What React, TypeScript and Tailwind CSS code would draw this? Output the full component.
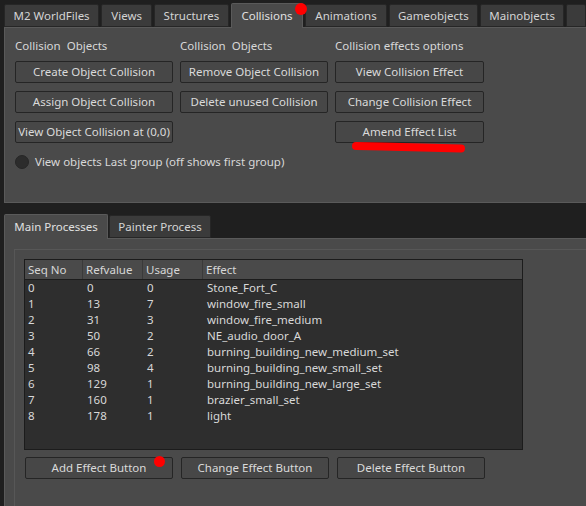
import React from 'react';

const topTabs = [
  { label: 'M2 WorldFiles', w: 'w-[97px]' },
  { label: 'Views', w: 'w-[52px]' },
  { label: 'Structures', w: 'w-[76px]' },
  { label: 'Collisions', w: 'w-[74px]', active: true },
  { label: 'Animations', w: 'w-[83px]' },
  { label: 'Gameobjects', w: 'w-[91px]' },
  { label: 'Mainobjects', w: 'w-[86px]' },
  { label: '', w: 'w-[20px]' },
];

const rows = [
  [0, 0, 0, 'Stone_Fort_C'],
  [1, 13, 7, 'window_fire_small'],
  [2, 31, 3, 'window_fire_medium'],
  [3, 50, 2, 'NE_audio_door_A'],
  [4, 66, 2, 'burning_building_new_medium_set'],
  [5, 98, 4, 'burning_building_new_small_set'],
  [6, 129, 1, 'burning_building_new_large_set'],
  [7, 160, 1, 'brazier_small_set'],
  [8, 178, 1, 'light'],
];

function Btn({ children, className = '' }: { children: React.ReactNode; className?: string }) {
  return (
    <div
      className={`h-[22px] flex items-center justify-center rounded-[2px] border border-[#252525] bg-[#474747] text-[#dadada] whitespace-nowrap ${className}`}
    >
      {children}
    </div>
  );
}

export default function App() {
  return (
    <div
      className="relative w-[586px] h-[506px] overflow-hidden bg-[#1f1f1f] text-[11.5px] text-[#d8d8d8]"
      style={{ fontFamily: '"Noto Sans", "Open Sans", sans-serif' }}
    >
      {/* top tab bar */}
      <div className="flex items-end h-[27px] pl-1 gap-[2px]">
        {topTabs.map((t, i) =>
          t.active ? (
            <div
              key={i}
              className={`${t.w} h-[25px] -mb-px z-10 flex items-center justify-center bg-[#4a4a4a] border border-b-0 border-[#5a5a5a] rounded-t-[2px] text-[#e0e0e0]`}
            >
              {t.label}
            </div>
          ) : (
            <div
              key={i}
              className={`${t.w} h-[23px] flex items-center justify-center bg-[#3b3b3b] border border-[#262626] rounded-t-[2px] text-[#d4d4d4]`}
            >
              {t.label}
            </div>
          )
        )}
      </div>

      {/* top panel */}
      <div className="ml-1 h-[176px] bg-[#4a4a4a] border-l border-t border-b border-[#5a5a5a] pl-[10px] pt-[10px]">
        <div className="grid grid-cols-[158px_148px_149px] gap-x-[7px] gap-y-[8px] auto-rows-[22px] grid-rows-[15px]">
          <div className="leading-[15px]">Collision&nbsp; Objects</div>
          <div className="leading-[15px]">Collision&nbsp; Objects</div>
          <div className="leading-[15px]">Collision effects options</div>
          <Btn>Create Object Collision</Btn>
          <Btn>Remove Object Collision</Btn>
          <Btn>View Collision Effect</Btn>
          <Btn>Assign Object Collision</Btn>
          <Btn>Delete unused Collision</Btn>
          <Btn>Change Collision Effect</Btn>
          <Btn>View Object Collision at (0,0)</Btn>
          <div />
          <Btn>Amend Effect List</Btn>
        </div>
        <div className="flex items-center gap-[6px] mt-[11px] h-[15px]">
          <div className="w-[14px] h-[14px] rounded-full bg-[#2c2c2c] border border-[#262626]" />
          <span>View objects Last group (off shows first group)</span>
        </div>
      </div>

      {/* bottom tab bar */}
      <div className="flex items-end h-[35px] pl-1 gap-px">
        <div className="w-[104px] h-[25px] -mb-px z-10 flex items-center justify-center bg-[#4a4a4a] border border-b-0 border-[#5a5a5a] rounded-t-[2px] text-[#e0e0e0]">
          Main Processes
        </div>
        <div className="w-[102px] h-[23px] flex items-center justify-center bg-[#3b3b3b] border border-[#262626] rounded-t-[2px] text-[#d4d4d4]">
          Painter Process
        </div>
      </div>

      {/* bottom panel */}
      <div className="ml-1 h-[300px] bg-[#4a4a4a] border-l border-t border-[#5a5a5a] pl-[9px] pt-[10px]">
        <div className="h-full border-l border-t border-[#575757] pl-[9px] pt-[9px]">
          <div className="w-[499px] h-[191px] border border-[#1c1c1c] bg-[#2e2e2e] flex flex-col">
            <div className="h-[20px] flex bg-[#4a4a4a] border-b border-[#1c1c1c] text-[#d6d6d6]">
              <div className="w-[58px] pl-[3px] flex items-center border-r border-[#3a3a3a]">Seq No</div>
              <div className="w-[60px] pl-[3px] flex items-center border-r border-[#3a3a3a]">Refvalue</div>
              <div className="w-[60px] pl-[3px] flex items-center border-r border-[#3a3a3a]">Usage</div>
              <div className="flex-1 pl-[3px] flex items-center">Effect</div>
            </div>
            {rows.map((r) => (
              <div key={r[0]} className="h-[16px] flex items-center text-[#d8d8d8]">
                <div className="w-[58px] pl-[3px]">{r[0]}</div>
                <div className="w-[60px] pl-[4px]">{r[1]}</div>
                <div className="w-[60px] pl-[4px]">{r[2]}</div>
                <div className="flex-1 pl-[4px]">{r[3]}</div>
              </div>
            ))}
          </div>
          <div className="flex gap-[8px] mt-[7px] ml-px">
            <Btn className="w-[148px]">Add Effect Button</Btn>
            <Btn className="w-[148px]">Change Effect Button</Btn>
            <Btn className="w-[148px]">Delete Effect Button</Btn>
          </div>
        </div>
      </div>

      {/* red annotations */}
      <div className="absolute z-20 left-[295px] top-[3px] w-[12px] h-[12px] rounded-full bg-[#ff0000]" />
      <div className="absolute z-20 left-[154px] top-[456px] w-[11px] h-[11px] rounded-full bg-[#ff0000]" />
      <svg className="absolute z-20 left-0 top-0 pointer-events-none" width="586" height="506">
        <path d="M356 146 L382 146.5 L461 148.5" stroke="#ff0000" strokeWidth="8" strokeLinecap="round" fill="none" />
      </svg>
    </div>
  );
}
